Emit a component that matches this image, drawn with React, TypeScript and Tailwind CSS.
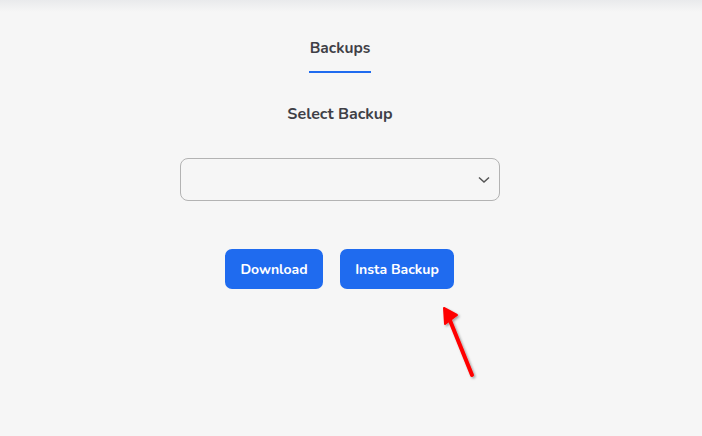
import React from "react";

export default function App() {
  return (
    <div
      className="relative w-[702px] h-[436px] overflow-hidden bg-[#f6f6f6]"
      style={{ fontFamily: '"Nunito", "Lato", "Noto Sans", sans-serif' }}
    >
      <div className="absolute inset-x-0 top-0 h-[12px] bg-gradient-to-b from-[#e9eaec] to-[#f6f6f6]" />
      <div className="relative w-[680px] flex flex-col items-center">
        <div className="mt-[38px] flex flex-col items-center">
          <div className="text-[15.5px] font-bold text-[#3f3f46] leading-[20px] px-[8px]">
            Backups
          </div>
          <div className="mt-[13px] h-[2px] w-[62px] bg-[#1f6bef]" />
        </div>
        <div className="mt-[31px] text-[16px] font-bold text-[#3f3f46] leading-[20px]">
          Select Backup
        </div>
        <div className="mt-[34px] w-[320px] h-[43px] rounded-[8px] border border-[#b3b3b3] flex items-center justify-end pr-[9px]">
          <svg width="12" height="8" viewBox="0 0 12 8" fill="none">
            <path d="M1 1.5 L6 6 L11 1.5" stroke="#555" strokeWidth="1.5" />
          </svg>
        </div>
        <div className="mt-[48px] flex gap-[17px] pr-[1px]">
          <button className="h-[40px] w-[98px] rounded-[7px] bg-[#1f6bef] text-white text-[14px] font-bold">
            Download
          </button>
          <button className="h-[40px] w-[114px] rounded-[7px] bg-[#1f6bef] text-white text-[14px] font-bold">
            Insta Backup
          </button>
        </div>
      </div>
      <svg
        className="absolute left-[430px] top-[300px]"
        width="60"
        height="90"
        viewBox="0 0 60 90"
      >
        <defs>
          <filter id="sh" x="-50%" y="-50%" width="200%" height="200%">
            <feDropShadow dx="1.5" dy="1.5" stdDeviation="1.2" floodColor="#000" floodOpacity="0.35" />
          </filter>
        </defs>
        <g filter="url(#sh)">
          <line x1="42" y1="75" x2="17" y2="13" stroke="#ff0000" strokeWidth="4" strokeLinecap="round" />
          <path d="M14 8 L15 24 L27 15 Z" fill="#ff0000" stroke="#ff0000" strokeWidth="2" strokeLinejoin="round" />
        </g>
      </svg>
    </div>
  );
}
